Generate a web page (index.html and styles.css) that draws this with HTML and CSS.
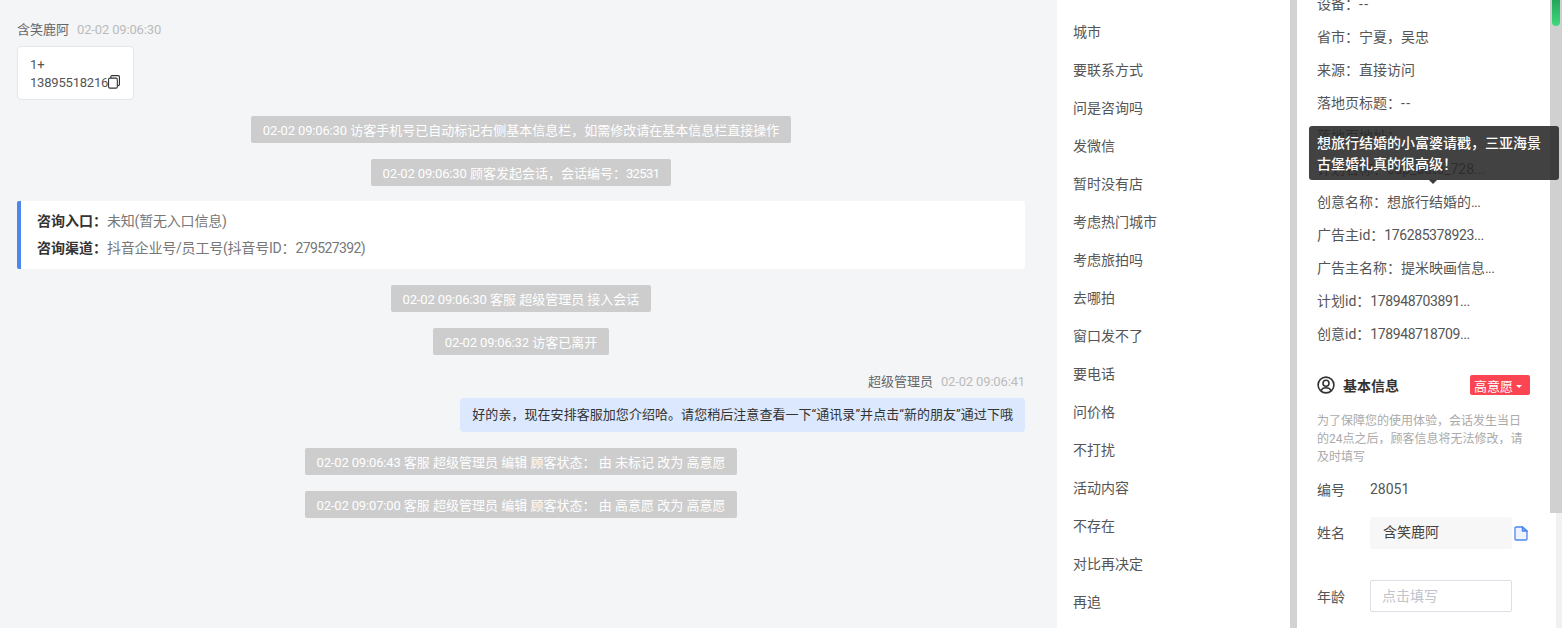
FILE: index.html
```html
<!DOCTYPE html>
<html>
<head>
  <title>会话详情</title>
  <link rel="stylesheet" href="styles.css">
</head>
<body>
  <div class="page">
    <div class="chat">
      <div class="meta"><span class="meta-name">含笑鹿阿</span><span class="meta-time time">02-02 09:06:30</span></div>
      <div class="phone-card">
        <div>1+</div>
        <div class="phone-line"><span class="phone-num">13895518216</span><svg class="copy-icon" width="12" height="14" viewBox="0 0 13 14" preserveAspectRatio="none" fill="none" stroke="#333" stroke-width="1.2"><rect x="0.6" y="3.2" width="9.5" height="10" rx="1.5"/><path d="M3 3V1.9Q3 .7 4.2 .7H11Q12.4 .7 12.4 2.1V9.2Q12.4 10.6 11 10.6H10.2"/></svg></div>
      </div>
      <div class="sys sys-first"><span class="time">02-02 09:06:30</span> 访客手机号已自动标记右侧基本信息栏，如需修改请在基本信息栏直接操作</div>
      <div class="sys"><span class="time">02-02 09:06:30</span> 顾客发起会话，会话编号：<span class="num">32531</span></div>
      <div class="entry">
        <div class="entry-row"><b>咨询入口：</b><span class="entry-val">未知(暂无入口信息)</span></div>
        <div class="entry-row"><b>咨询渠道：</b><span class="entry-val">抖音企业号/员工号(抖音号ID：<span class="num">279527392</span>)</span></div>
      </div>
      <div class="sys"><span class="time">02-02 09:06:30</span> 客服 超级管理员 接入会话</div>
      <div class="sys"><span class="time">02-02 09:06:32</span> 访客已离开</div>
      <div class="meta meta-right"><span class="meta-name">超级管理员</span><span class="meta-time time">02-02 09:06:41</span></div>
      <div class="bubble">好的亲，现在安排客服加您介绍哈。请您稍后注意查看一下“通讯录”并点击“新的朋友”通过下哦</div>
      <div class="sys sys-after"><span class="time">02-02 09:06:43</span> 客服 超级管理员 编辑 顾客状态： 由 未标记 改为 高意愿</div>
      <div class="sys"><span class="time">02-02 09:07:00</span> 客服 超级管理员 编辑 顾客状态： 由 高意愿 改为 高意愿</div>
    </div>

    <div class="words">
      <div class="word">城市</div>
      <div class="word">要联系方式</div>
      <div class="word">问是咨询吗</div>
      <div class="word">发微信</div>
      <div class="word">暂时没有店</div>
      <div class="word">考虑热门城市</div>
      <div class="word">考虑旅拍吗</div>
      <div class="word">去哪拍</div>
      <div class="word">窗口发不了</div>
      <div class="word">要电话</div>
      <div class="word">问价格</div>
      <div class="word">不打扰</div>
      <div class="word">活动内容</div>
      <div class="word">不存在</div>
      <div class="word">对比再决定</div>
      <div class="word">再追</div>
    </div>

    <div class="divider"></div>

    <div class="side">
      <div class="attrs">
        <div class="attr">设备：<span class="dash">--</span></div>
        <div class="attr">省市：宁夏，吴忠</div>
        <div class="attr">来源：直接访问</div>
        <div class="attr">落地页标题：<span class="dash">--</span></div>
        <div class="attr">落地页地址：</div>
        <div class="attr">计划名称：cdp_auto_728...</div>
        <div class="attr">创意名称：想旅行结婚的<span class="num">...</span></div>
        <div class="attr">广告主id：<span class="id-num">176285378923...</span></div>
        <div class="attr">广告主名称：提米映画信息<span class="num">...</span></div>
        <div class="attr">计划id：<span class="id-num">178948703891...</span></div>
        <div class="attr">创意id：<span class="id-num">178948718709...</span></div>
      </div>

      <div class="section-head">
        <svg width="18" height="18" viewBox="0 0 18 18" fill="none" stroke="#333" stroke-width="1.6"><circle cx="9" cy="9" r="7.9"/><circle cx="9" cy="7.2" r="3"/><path d="M3.9 14.6C5 12.4 7 11.7 9 11.7S13 12.4 14.1 14.6"/></svg>
        <span class="section-title">基本信息</span>
        <span class="badge">高意愿<i class="caret"></i></span>
      </div>
      <p class="notice">为了保障您的使用体验，会话发生当日的24点之后，顾客信息将无法修改，请及时填写</p>

      <div class="field field-id"><span class="field-label">编号</span><span>28051</span></div>
      <div class="field field-name">
        <span class="field-label">姓名</span>
        <span class="input input-filled">含笑鹿阿</span>
        <svg class="file-icon" width="14" height="15" viewBox="0 0 14 15" fill="none" stroke="#4e86ee" stroke-width="1.3"><path d="M1 2.2Q1 1 2.2 1H8.4L13 5V12.8Q13 14 11.8 14H2.2Q1 14 1 12.8Z" fill="#eef3fe"/><path d="M8.4 1V5H13Z" fill="#8fb2f2"/></svg>
      </div>
      <div class="field field-age">
        <span class="field-label">年龄</span>
        <span class="input input-empty">点击填写</span>
      </div>
    </div>

    <div class="scroll-track">
      <div class="scroll-thumb"></div>
      <div class="scroll-end"></div>
    </div>
    <div class="scroll-green"></div>

    <div class="tooltip">想旅行结婚的小富婆请戳，三亚海景古堡婚礼真的很高级！<i class="tooltip-arrow"></i></div>
  </div>
</body>
</html>
```

FILE: styles.css
```css
* {
  box-sizing: border-box;
}
html, body {
  margin: 0;
  height: 100%;
  overflow: hidden;
}
body {
  font-family: Roboto, "Noto Sans CJK SC", sans-serif;
  font-size: 14px;
  font-variant-ligatures: none;
  color: #444;
  background-color: #f4f5f7;
}
.page {
  position: relative;
  display: flex;
  height: 628px;
  overflow: hidden;
}
.time {
  letter-spacing: -0.15px;
}
.num {
  letter-spacing: -0.6px;
}
.id-num {
  letter-spacing: -0.4px;
}
.dash {
  letter-spacing: 1.5px;
}

/* chat column */
.chat {
  width: 1057px;
  flex: none;
  display: flex;
  flex-direction: column;
  padding: 22px 32px 0 17px;
}
.meta {
  display: flex;
  gap: 8px;
  height: 16px;
  line-height: 16px;
  font-size: 13px;
}
.meta-name {
  color: #666;
}
.meta-time {
  color: #bbb;
}
.meta-right {
  justify-content: flex-end;
  margin-top: 19px;
}
.phone-card {
  align-self: flex-start;
  width: 117px;
  height: 54px;
  margin-top: 8px;
  padding: 9px 12px 0;
  background-color: #fff;
  border: 1px solid #e4e6ea;
  border-radius: 4px;
  font-size: 13px;
  line-height: 18px;
  color: #555;
}
.phone-line {
  display: flex;
  align-items: center;
  white-space: nowrap;
}
.phone-num {
  letter-spacing: -0.2px;
}
.copy-icon {
  flex: none;
  margin: -3px 0 0 0;
}
.sys {
  align-self: center;
  height: 27px;
  margin-top: 16px;
  padding: 0 12px;
  line-height: 29px;
  font-size: 13px;
  color: #fff;
  background-color: #cdcdcd;
  border-radius: 2px;
  white-space: nowrap;
}
.entry {
  height: 68px;
  margin-top: 15px;
  padding: 7px 16px;
  background-color: #fff;
  border-left: 4px solid #4e86ee;
  border-radius: 2px;
  font-size: 14px;
  color: #777;
}
.entry-row {
  height: 27px;
  line-height: 27px;
}
.entry-row b {
  color: #333;
  font-weight: 700;
}
.entry-val {
  letter-spacing: -0.2px;
}
.bubble {
  align-self: flex-end;
  height: 34px;
  margin-top: 8px;
  padding: 0 12px;
  line-height: 34px;
  font-size: 13px;
  letter-spacing: 0.05px;
  color: #333;
  background-color: #dbe8fd;
  border-radius: 4px;
  white-space: nowrap;
}
.sys-after {
  margin-top: 16px;
}

/* quick words column */
.words {
  width: 233px;
  flex: none;
  padding: 13px 16px 0;
  background-color: #fff;
}
.word {
  height: 38px;
  line-height: 38px;
  color: #555;
  white-space: nowrap;
}
.divider {
  width: 7px;
  flex: none;
  background-color: #d2d2d2;
}

/* customer column */
.side {
  flex: 1;
  padding-left: 20px;
  background-color: #fff;
}
.attrs {
  margin-top: -12px;
}
.attr {
  height: 33px;
  line-height: 33px;
  color: #555;
  white-space: nowrap;
}
.section-head {
  display: flex;
  align-items: center;
  width: 213px;
  height: 20px;
  margin-top: 24px;
}
.section-title {
  margin-left: 8px;
  font-weight: 700;
  font-size: 14px;
  color: #333;
}
.badge {
  display: flex;
  align-items: center;
  width: 60px;
  height: 20px;
  margin-left: auto;
  padding: 0 4px;
  font-size: 13px;
  color: #fff;
  background-color: #fb4552;
  border-radius: 2px;
}
.caret {
  margin: 2px 0 0 3px;
  border: 3.5px solid transparent;
  border-top-color: #fff;
  border-bottom-width: 0;
}
.notice {
  width: 213px;
  margin: 17px 0 0;
  font-size: 12px;
  line-height: 18px;
  color: #aaa;
}
.field {
  display: flex;
  align-items: center;
  color: #555;
}
.field-label {
  width: 53px;
  flex: none;
}
.field-id {
  height: 20px;
  margin-top: 13px;
}
.field-name {
  margin-top: 18px;
}
.field-name .field-label {
  margin-bottom: 2px;
}
.field-age {
  margin-top: 31px;
}
.input {
  display: block;
  width: 142px;
  height: 32px;
  padding: 0 13px;
  line-height: 30px;
  border-radius: 2px;
}
.input-filled {
  background-color: #f7f7f7;
  color: #444;
}
.input-empty {
  padding: 0 11px;
  border: 1px solid #dcdfe6;
  color: #c0c4cc;
}
.file-icon {
  margin-left: 2px;
}

/* scrollbar on the right edge */
.scroll-track {
  width: 12px;
  flex: none;
  display: flex;
  flex-direction: column;
  background-color: #fff;
}
.scroll-thumb {
  height: 513px;
  background-color: #d0d0d0;
}
.scroll-end {
  flex: 1;
  margin-left: 6px;
  background-color: #f1f1f1;
}
.scroll-green {
  position: absolute;
  top: -4px;
  right: 2px;
  width: 8px;
  height: 30px;
  border-radius: 4px;
  background: linear-gradient(#1f9d55, #3fd97a);
}

.tooltip {
  position: absolute;
  top: 126px;
  left: 1309px;
  width: 250px;
  height: 54px;
  padding: 7px 8px 0;
  font-size: 14px;
  font-weight: 500;
  line-height: 21px;
  color: #fff;
  background-color: rgba(40, 40, 40, 0.88);
  border-radius: 3px;
}
.tooltip-arrow {
  position: absolute;
  left: 120px;
  bottom: -4px;
  border: 4px solid transparent;
  border-top-color: #3a3a3a;
  border-bottom-width: 0;
}
```
